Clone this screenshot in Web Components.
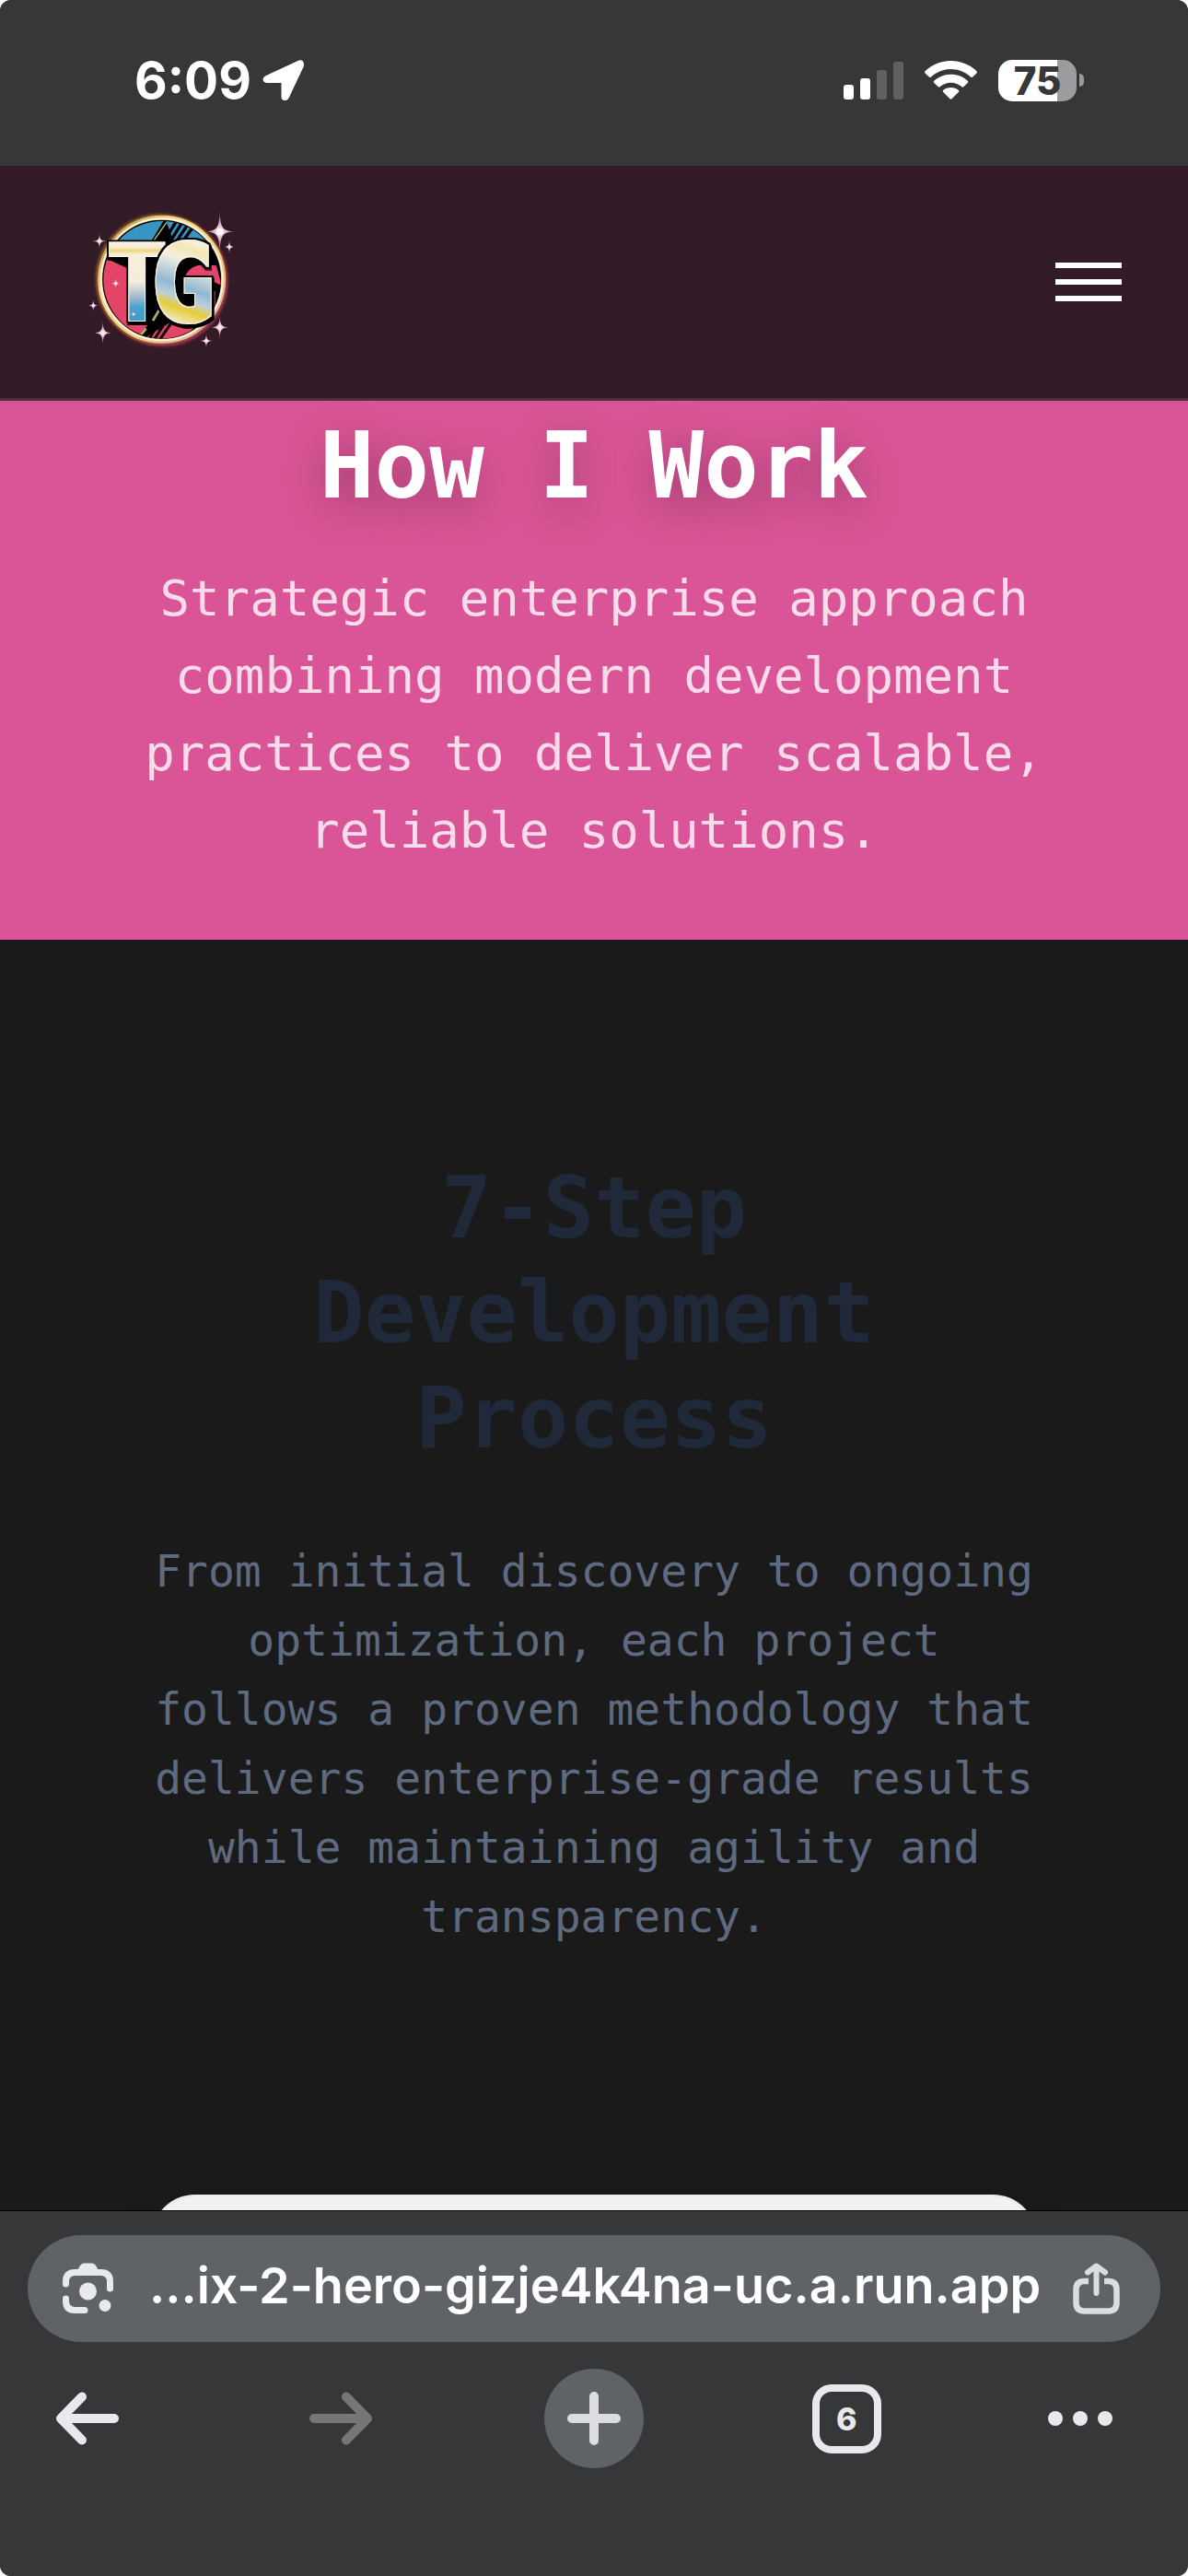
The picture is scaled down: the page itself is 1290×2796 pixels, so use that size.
<!DOCTYPE html>
<html lang="en">
<head>
<meta charset="utf-8">
<meta name="viewport" content="width=device-width, initial-scale=1">
<title>How I Work</title>
<style>
  html { background: #fff; }
  body { margin: 0; background: #fff; }
</style>
</head>
<body>
<phone-screen>
  <status-bar slot="top" time="6:09" battery="75"></status-bar>
  <site-header slot="top"></site-header>
  <page-hero>
    <span slot="title">How I Work</span>
    Strategic enterprise approach combining modern development practices to deliver scalable, reliable solutions.
  </page-hero>
  <process-section>
    <span slot="title">7-Step Development Process</span>
    From initial discovery to ongoing optimization, each project follows a proven methodology that delivers enterprise-grade results while maintaining agility and transparency.
    <step-card slot="steps"></step-card>
  </process-section>
  <browser-toolbar slot="bottom" address="...ix-2-hero-gizje4k4na-uc.a.run.app" tabs="6"></browser-toolbar>
</phone-screen>

<script>
function define(name, markup, setup) {
  const template = document.createElement('template');
  template.innerHTML = markup;
  customElements.define(name, class extends HTMLElement {
    constructor() {
      super();
      this.attachShadow({ mode: 'open' }).append(template.content.cloneNode(true));
    }
    connectedCallback() { if (setup) setup(this, this.shadowRoot); }
  });
}

define('phone-screen', `
  <style>
    :host { display: flex; flex-direction: column; height: 100vh; overflow: hidden; border-radius: 12px; background: #363739; }
    main { flex: 1; min-height: 0; overflow: hidden; background: #1a1a1a; }
  </style>
  <slot name="top"></slot>
  <main><slot></slot></main>
  <slot name="bottom"></slot>
`);

define('status-bar', `
  <style>
    :host { display: flex; flex: none; align-items: center; justify-content: space-between; box-sizing: border-box;
      height: 180px; padding: 0 113px 6px 146px; background: #363739; color: #fff; font-family: Inter, sans-serif; }
    .group { display: flex; align-items: center; }
    svg { display: block; }
    .time { gap: 12px; font-size: 55px; font-weight: 700; line-height: 60px; }
    .icons { gap: 23px; }
    .battery { display: flex; align-items: center; gap: 3px; }
    .cell { display: flex; align-items: center; justify-content: center; width: 85px; height: 45px; border-radius: 15px;
      background: linear-gradient(90deg, #fff 64px, #9b9c9e 64px); color: #363739; font-size: 42px; font-weight: 800; line-height: 45px; }
    .cap { width: 5px; height: 14px; border-radius: 0 5px 5px 0; background: #9b9c9e; }
  </style>
  <div class="group time"><span id="time"></span>
    <svg width="46" height="46" viewBox="0 0 46 46" fill="#fff"><path d="M39 1.8Q42 .4 44 2.6Q45.700 5 44.800 8L29 41.500Q27.600 45 24.300 45Q20.500 45 20.500 41V26H5Q1 26 .6 22.600Q.4 19.600 4 18Z"/></svg>
  </div>
  <div class="group icons">
    <svg width="65" height="42" viewBox="0 0 65 42"><g fill="#fff"><rect y="26" width="11" height="16" rx="3"/><rect x="18" y="19" width="11" height="23" rx="3"/></g><g fill="#5f6062"><rect x="36" y="10" width="11" height="32" rx="3"/><rect x="54" y="1" width="11" height="41" rx="3"/></g></svg>
    <svg width="57" height="42" viewBox="0 0 57 42" fill="#fff"><path d="M28.500 0C39 0 49 4 56.300 11Q57.500 12.200 56.400 13.400L52.200 17.600Q51.200 18.500 50 17.500C44 12 36.500 9 28.500 9S13 12 7 17.500Q5.800 18.500 4.800 17.600L.6 13.400Q-.5 12.200 .7 11C8 4 18 0 28.500 0Z"/><path d="M28.500 14.700C35.500 14.700 42 17.300 46.700 21.800Q47.800 23 46.700 24L42.500 28Q41.500 29 40.200 28C37 25.300 33 23.700 28.500 23.700S20 25.300 16.800 28Q15.500 29 14.500 28L10.300 24Q9.200 23 10.300 21.800C15 17.300 21.500 14.700 28.500 14.700Z"/><path d="M28.500 29C31.700 29 34.500 30 36.700 31.700Q37.900 32.800 36.800 33.900L29.800 41Q28.500 42.300 27.200 41L20.200 33.900Q19.100 32.800 20.300 31.700C22.500 30 25.300 29 28.500 29Z"/></svg>
    <div class="battery"><div class="cell" id="level"></div><div class="cap"></div></div>
  </div>
`, (el, root) => {
  root.getElementById('time').textContent = el.getAttribute('time');
  root.getElementById('level').textContent = el.getAttribute('battery');
});

define('tg-logo', `
  <style>:host { display: block; width: 190px; height: 180px; } svg { display: block; width: 100%; height: 100%; }</style>
  <svg viewBox="0 0 570 540" role="img" aria-label="TG">
    <defs>
      <linearGradient id="ring" x1="0" y1="0" x2="1" y2="1"><stop offset="0" stop-color="#a97b22"/><stop offset=".3" stop-color="#f2d98a"/><stop offset=".6" stop-color="#e9d27a"/><stop offset="1" stop-color="#d9a7a0"/></linearGradient>
      <linearGradient id="t" gradientUnits="userSpaceOnUse" x1="0" y1="160" x2="0" y2="415"><stop offset="0" stop-color="#f8f0de"/><stop offset=".06" stop-color="#f6ecd6"/><stop offset=".1" stop-color="#ecd67a"/><stop offset=".15" stop-color="#f7eedb"/><stop offset=".5" stop-color="#f5ecdd"/><stop offset=".7" stop-color="#9fbad0"/><stop offset=".82" stop-color="#4aa3cd"/><stop offset="1" stop-color="#3e9bc8"/></linearGradient>
      <linearGradient id="g" gradientUnits="userSpaceOnUse" x1="400" y1="160" x2="310" y2="418"><stop offset="0" stop-color="#f8f0dc"/><stop offset=".1" stop-color="#f3e6b4"/><stop offset=".24" stop-color="#f6efe0"/><stop offset=".55" stop-color="#8fb8d2"/><stop offset=".68" stop-color="#b9cfdd"/><stop offset=".8" stop-color="#e8cd3a"/><stop offset="1" stop-color="#f3ecd6"/></linearGradient>
      <radialGradient id="star" gradientUnits="userSpaceOnUse" cx="0" cy="0" r="40"><stop offset="0" stop-color="#fff"/><stop offset=".25" stop-color="#ecc6d0"/><stop offset="1" stop-color="#8a3c55"/></radialGradient>
      <clipPath id="disc"><circle cx="288" cy="281" r="191"/></clipPath>
      <filter id="glow" x="-20%" y="-20%" width="140%" height="140%"><feGaussianBlur stdDeviation="5"/></filter>
      <filter id="bevel" x="-20%" y="-20%" width="140%" height="140%">
        <feMorphology in="SourceAlpha" operator="dilate" radius="3" result="wide"/>
        <feFlood flood-color="#fbf5e6"/><feComposite in2="wide" operator="in" result="edge"/>
        <feMorphology in="SourceAlpha" operator="dilate" radius="8" result="outline"/>
        <feOffset in="outline" dx="4" dy="5" result="drop"/>
        <feMerge><feMergeNode in="drop"/><feMergeNode in="outline"/><feMergeNode in="edge"/><feMergeNode in="SourceGraphic"/></feMerge>
      </filter>
      <path id="spark" d="M0-40C1-6 6-1 34 0C6 1 1 6 0 40C-1 6-6 1-34 0C-6-1-1-6 0-40Z" fill="url(#star)"/>
    </defs>
    <circle cx="290" cy="285" r="207" fill="none" stroke="#b43356" stroke-width="10" filter="url(#glow)"/>
    <circle cx="283" cy="278" r="207" fill="none" stroke="#a97b22" stroke-width="6" filter="url(#glow)"/>
    <circle cx="287" cy="280" r="201" fill="#000" stroke="url(#ring)" stroke-width="15"/>
    <circle cx="287" cy="280" r="198" fill="none" stroke="#fbf3df" stroke-width="6"/>
    <g clip-path="url(#disc)">
      <path d="M80 90H292L250 160H80Z" fill="#3795c4"/>
      <path d="M300 88H390L450 165H330Z" fill="#3795c4"/>
      <path d="M90 205L180 245V410L240 430L200 480H90Z" fill="#e34467"/>
      <path d="M360 275Q378 232 425 232L465 235L482 300L445 282Z" fill="#e34467"/>
      <path d="M320 416Q350 450 390 438L340 490H200Z" fill="#e34467"/>
      <g stroke="#000" stroke-width="10"><path d="M338 85L285 170M356 90L305 172M374 98L325 170M390 108L348 165"/></g>
      <path d="M302 95L262 152" stroke="#b9c878" stroke-width="4"/>
      <path d="M284 370L258 414M236 440L218 462" stroke="#a5b26f" stroke-width="8"/>
      <g stroke="#000" stroke-width="9"><path d="M290 400L242 480M308 405L258 482M326 410L272 488"/></g>
      <path d="M118 212L178 245V428H232V212Z" fill="#000"/>
      <path d="M229 212V418M458 318V372" stroke="#c9405f" stroke-width="6" fill="none"/>
    </g>
    <g font-family="'DejaVu Sans Mono', monospace" font-weight="700" font-size="346">
      <text x="102" y="413" fill="url(#t)" filter="url(#bevel)">T</text>
      <text x="252" y="413" fill="url(#g)" stroke="url(#g)" stroke-width="6" filter="url(#bevel)">G</text>
    </g>
    <g>
      <use href="#spark" transform="translate(476 124) scale(1.500 1.700)"/>
      <use href="#spark" transform="translate(84 155) scale(.7)"/>
      <use href="#spark" transform="translate(507 174) scale(.6)"/>
      <use href="#spark" transform="translate(64 365) scale(.55)"/>
      <use href="#spark" transform="translate(95 454)"/>
      <use href="#spark" transform="translate(476 436)"/>
      <use href="#spark" transform="translate(432 480) scale(.65)"/>
      <use href="#spark" transform="translate(137 293) scale(.55)"/>
      <use href="#spark" transform="translate(195 393) scale(.4)"/>
      <circle cx="476" cy="124" r="11" fill="#fff"/>
    </g>
  </svg>
`);

define('site-header', `
  <style>
    :host { display: flex; flex: none; align-items: center; justify-content: space-between; box-sizing: border-box; height: 255px;
      padding: 0 72px 0 80px; background: #321a26; border-bottom: 3px solid #4a2f3c; }
    a { display: block; margin-bottom: 12px; }
    button { display: flex; flex-direction: column; gap: 12px; padding: 0; border: 0; background: none; }
    i { width: 72px; height: 6px; background: #fff; }
  </style>
  <a href="#" aria-label="Home"><tg-logo></tg-logo></a>
  <button aria-label="Menu"><i></i><i></i><i></i></button>
`);

define('page-hero', `
  <style>
    :host { display: block; padding: 14px 144px 76px; background: #da5597; text-align: center; font-family: "DejaVu Sans Mono", monospace; }
    h1 { margin: 0 0 45px; color: #fff; font-size: 99px; line-height: 114px; font-weight: 700; text-shadow: 0 12px 48px rgba(0, 0, 0, .3); }
    p { margin: 0; color: #f8dcea; font-size: 54px; line-height: 84px; }
  </style>
  <h1><slot name="title"></slot></h1>
  <p><slot></slot></p>
`);

define('process-section', `
  <style>
    :host { display: block; padding: 235px 164px 0; text-align: center; font-family: "DejaVu Sans Mono", monospace; }
    h2 { margin: 0 0 71px; color: #1f293a; font-size: 92px; line-height: 114px; font-weight: 700; }
    p { margin: 0 0 264px; color: #5e6a7f; font-size: 48px; line-height: 75px; }
  </style>
  <h2><slot name="title"></slot></h2>
  <p><slot></slot></p>
  <slot name="steps"></slot>
`);

define('step-card', `
  <style>:host { display: block; height: 400px; border: 3px solid #ebebf1; border-radius: 48px; background: #f2f2f3; box-shadow: 0 12px 48px rgba(0, 0, 0, .12); }</style>
`);

define('browser-toolbar', `
  <style>
    :host { display: block; flex: none; box-sizing: border-box; height: 397px; padding-top: 26px; border-top: 1px solid #000; background: #363739;
      font-family: Inter, sans-serif; }
    svg { display: block; flex: none; }
    button { display: flex; align-items: center; justify-content: center; padding: 0; border: 0; background: none; color: #e8e9ed; font-family: inherit; }
    .address { display: flex; align-items: center; justify-content: space-between; box-sizing: border-box; height: 116px; margin: 0 30px; padding: 0 44px 0 38px;
      border-radius: 58px; background: #5f6267; }
    input { flex: 1; min-width: 0; padding: 0 0 6px; margin: 0 12px 0 38px; border: 0; background: none; color: #fff; font: 600 54px/72px Inter, sans-serif; }
    nav { display: flex; align-items: center; justify-content: space-between; margin-top: 29px; padding: 0 81px 0 38px; }
    nav button { width: 114px; height: 108px; }
    nav button.more { width: 72px; }
    .new span { display: flex; align-items: center; justify-content: center; width: 108px; height: 108px; border-radius: 50%; background: #5f6267; }
    .tabs span { box-sizing: border-box; width: 75px; height: 75px; border: 8px solid #e8e9ed; border-radius: 21px; font-size: 34px; font-weight: 800; line-height: 60px; }
  </style>
  <div class="address">
    <button aria-label="Search with camera"><svg width="56" height="56" viewBox="0 0 56 56"><g fill="none" stroke="#e8e9ed" stroke-width="7" stroke-linecap="round"><path d="M3.500 23V20.500Q3.500 10.500 13.500 10.500H41.500Q51.500 10.500 51.500 20.500V28"/><path d="M3.500 39V41.500Q3.500 51.500 13.500 51.500H24"/></g><path d="M15 10L19 3Q20.500 .5 23 .5H32Q34.500 .5 36 3L40 10Z" fill="#e8e9ed"/><circle cx="27.500" cy="31" r="9.500" fill="#e8e9ed"/><circle cx="46" cy="46.500" r="6.500" fill="#e8e9ed"/></svg></button>
    <input type="text" aria-label="Address" readonly>
    <button aria-label="Share"><svg width="51" height="56" viewBox="0 0 51 56" fill="none" stroke="#dcdde1" stroke-width="6.500" stroke-linejoin="round"><path d="M17 20H13Q3.500 20 3.500 29V43.500Q3.500 52.500 13 52.500H38Q47.500 52.500 47.500 43.500V29Q47.500 20 38 20H34"/><path d="M25.500 33V4M16 10.500L25.500 3.500L35 10.500" stroke-linecap="round" stroke-width="6"/></svg></button>
  </div>
  <nav>
    <button aria-label="Back"><svg width="70" height="58" viewBox="0 0 70 58" fill="none" stroke="#e8e9ed" stroke-width="10" stroke-linecap="round" stroke-linejoin="round"><path d="M64 29H6M29 5.500L6 29L29 52.500"/></svg></button>
    <button aria-label="Forward" disabled><svg width="70" height="58" viewBox="0 0 70 58" fill="none" stroke="#757678" stroke-width="10" stroke-linecap="round" stroke-linejoin="round"><path d="M6 29H64M41 5.500L64 29L41 52.500"/></svg></button>
    <button class="new" aria-label="New tab"><span><svg width="58" height="58" viewBox="0 0 58 58" stroke="#dcdde1" stroke-width="10" stroke-linecap="round"><path d="M29 5V53M5 29H53"/></svg></span></button>
    <button class="tabs" aria-label="Open tabs"><span id="tabs"></span></button>
    <button class="more" aria-label="More"><svg width="70" height="16" viewBox="0 0 70 16" fill="#e8e9ed"><circle cx="8" cy="8" r="8"/><circle cx="35" cy="8" r="8"/><circle cx="62" cy="8" r="8"/></svg></button>
  </nav>
`, (el, root) => {
  root.querySelector('input').value = el.getAttribute('address');
  root.getElementById('tabs').textContent = el.getAttribute('tabs');
});
</script>
</body>
</html>
